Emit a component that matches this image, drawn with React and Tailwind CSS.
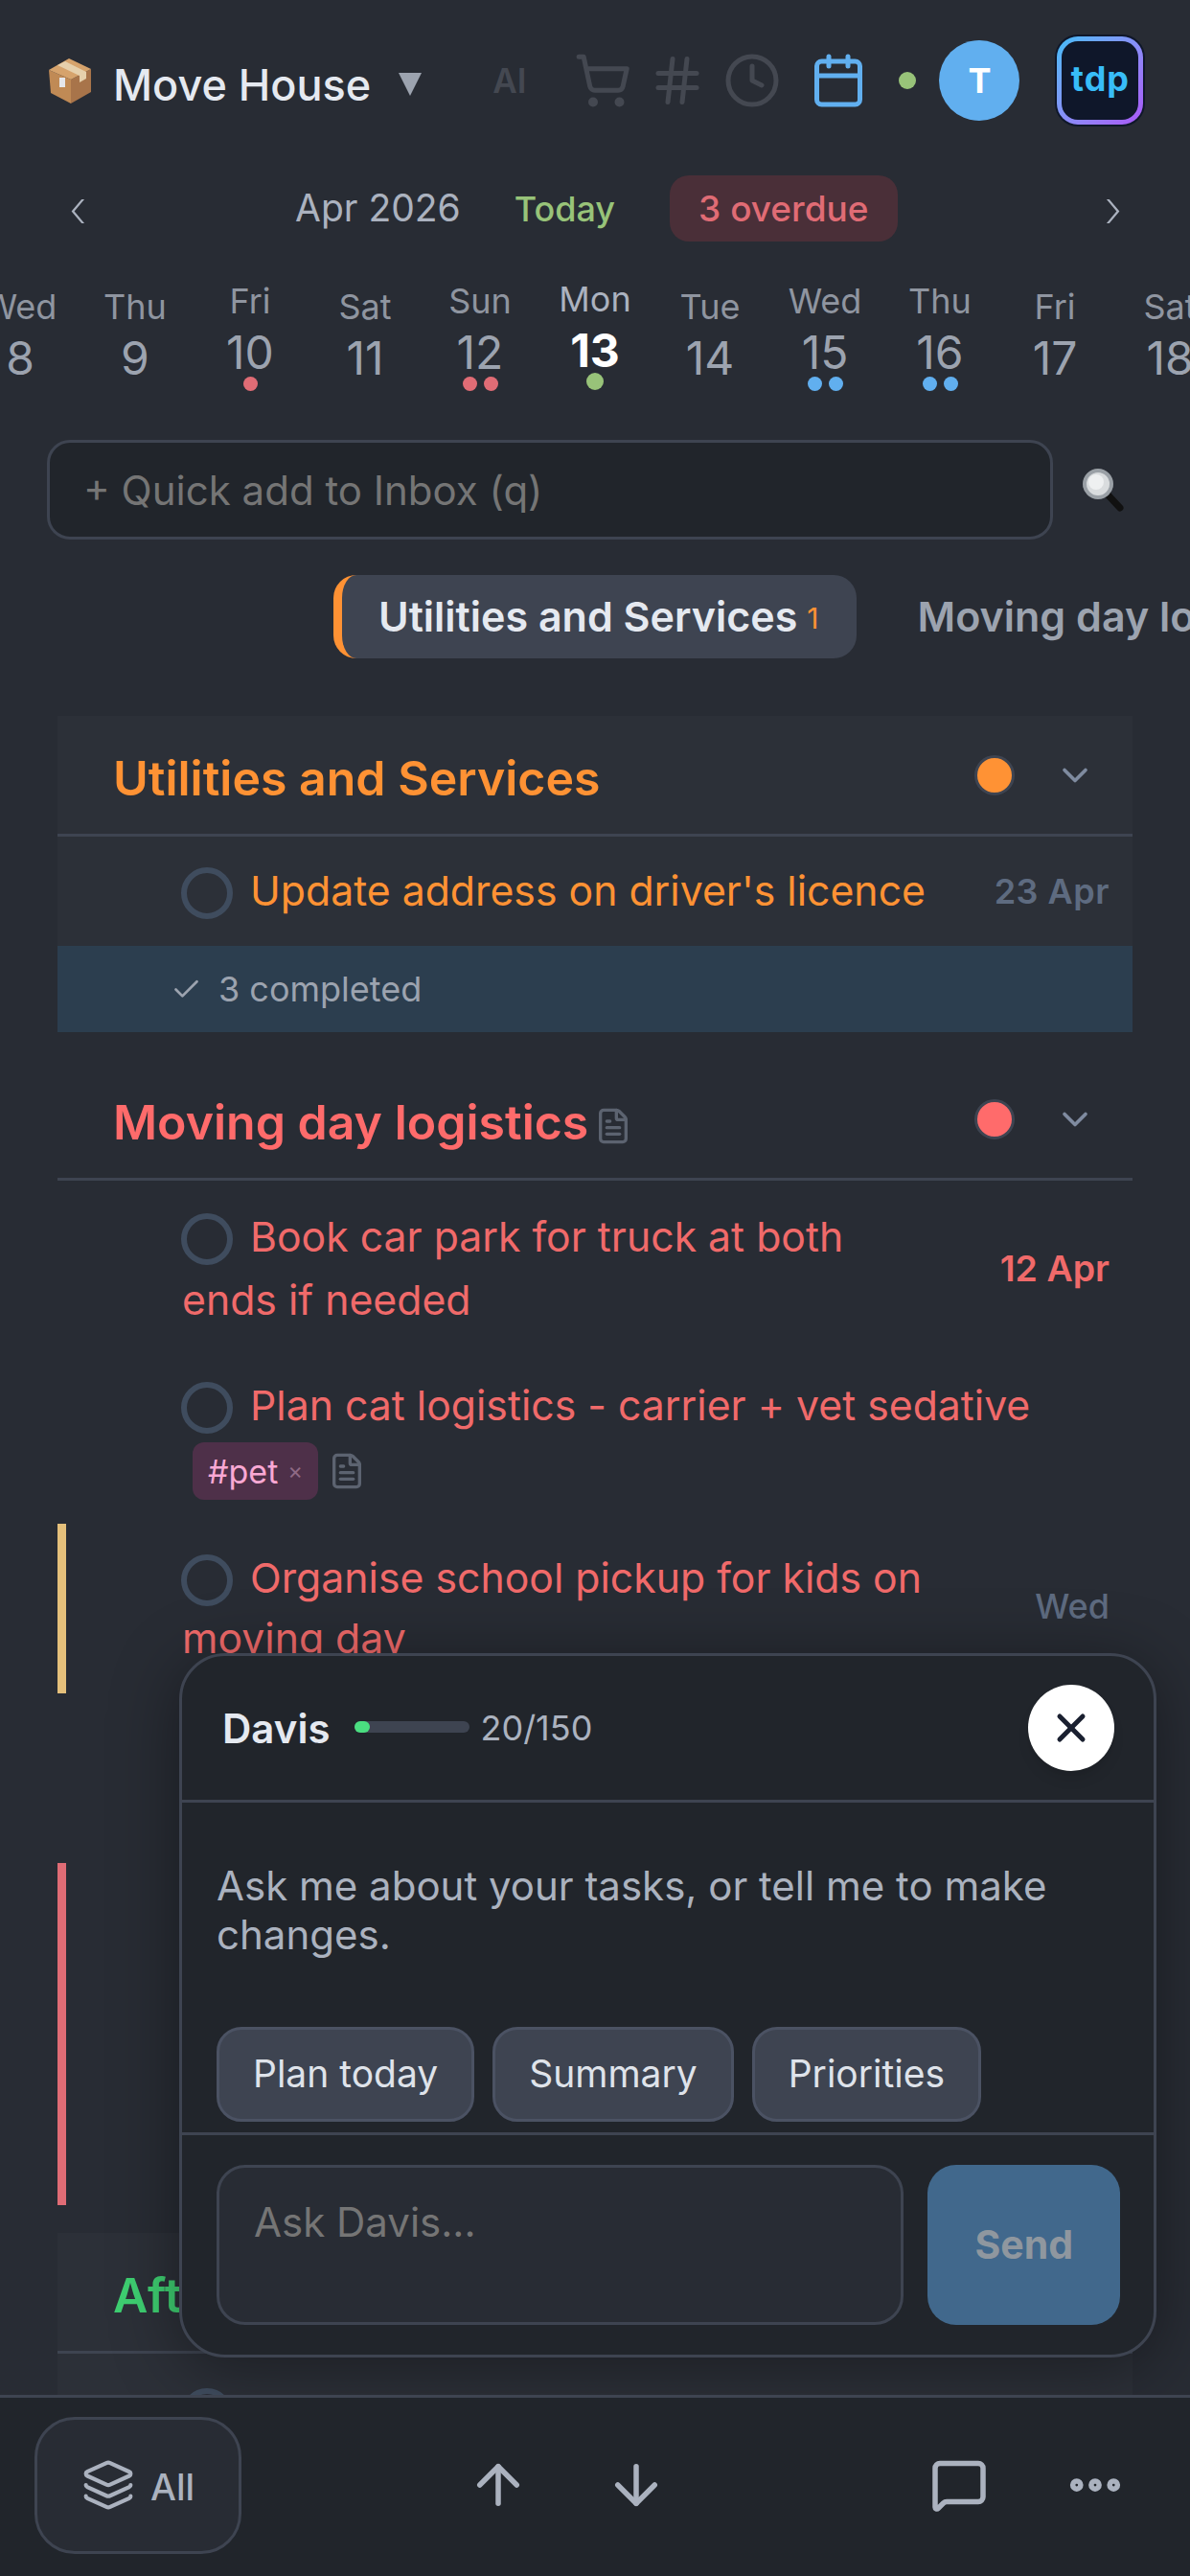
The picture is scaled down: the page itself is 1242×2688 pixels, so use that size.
import { ShoppingCart, Hash, Clock, Calendar, ChevronDown, FileText, X, Layers, ArrowUp, ArrowDown, MessageSquare, MoreHorizontal, Check } from 'lucide-react'

const days = [
  { label: 'Wed', num: '8' },
  { label: 'Thu', num: '9' },
  { label: 'Fri', num: '10', dots: ['bg-[#e06c75]'] },
  { label: 'Sat', num: '11' },
  { label: 'Sun', num: '12', dots: ['bg-[#e06c75]', 'bg-[#e06c75]'] },
  { label: 'Mon', num: '13', today: true, dots: ['bg-[#98c379]'] },
  { label: 'Tue', num: '14' },
  { label: 'Wed', num: '15', dots: ['bg-[#61afef]', 'bg-[#61afef]'] },
  { label: 'Thu', num: '16', dots: ['bg-[#61afef]', 'bg-[#61afef]'] },
  { label: 'Fri', num: '17' },
  { label: 'Sat', num: '18' },
]

const BoxEmoji = () => (
  <svg width="46" height="48" viewBox="0 0 46 48" className="shrink-0">
    <path d="M1 13 L24 23 L24 48 L3 37 Z" fill="#c08a55" />
    <path d="M24 23 L45 12 L45 36 L24 48 Z" fill="#a8744a" />
    <path d="M1 13 L22 1 L45 12 L24 23 Z" fill="#d6a36c" />
    <path d="M10 8 L33 19 L33 26 L40 22 L40 15 L18 4 Z" fill="#e6d0ac" />
    <rect x="12" y="21" width="6" height="10" fill="#e5e7eb" />
  </svg>
)

const Magnifier = () => (
  <svg width="46" height="46" viewBox="0 0 46 46">
    <path d="M26 27 L40 42" stroke="#111" strokeWidth="7" strokeLinecap="round" />
    <circle cx="17" cy="17" r="14" fill="#d9dcde" stroke="#9aa0a6" strokeWidth="4" />
    <circle cx="15" cy="15" r="8" fill="#eef0f1" />
  </svg>
)

const Dot = ({ color }) => (
  <div className={`w-[42px] h-[42px] rounded-full border-[3px] border-[#3e4451] ${color}`} />
)

const Ring = () => (
  <span className="inline-block align-middle w-[54px] h-[54px] rounded-full border-[6px] border-[#3f4c5e] mr-[18px] -mt-[3px] -ml-[1px]" />
)

const Task = ({ children, date, dateClass, color, className }) => (
  <div className={`flex items-center pl-[130px] pr-[24px] ${className}`}>
    <div className={`flex-1 text-[42.75px] leading-[66px] ${color}`}>
      <Ring />
      {children}
    </div>
    {date && <span className={`shrink-0 ${dateClass}`}>{date}</span>}
  </div>
)

const SectionHeader = ({ title, color, dot, note }) => (
  <div className="flex items-center h-[126px] border-b-[3px] border-[#3e4451] pl-[58px] pr-[38px]">
    <h2 className={`flex-1 flex items-center pt-[8px] text-[50px] font-semibold whitespace-nowrap ${color}`}>
      {title}
      {note && <FileText size={40} className="ml-[6px] mt-[6px] text-[#5c6370]" />}
    </h2>
    <Dot color={dot} />
    <ChevronDown size={44} className="ml-[41px] text-[#7f8ba0]" />
  </div>
)

export default function App() {
  return (
    <div className="relative w-[1242px] h-[2688px] overflow-hidden bg-[#282c34] font-['Inter',sans-serif] text-[#abb2bf]">

      {/* Header */}
      <div className="flex items-center h-[168px] pl-[50px]">
        <BoxEmoji />
        <span className="ml-[22px] mt-[10px] text-[45px] font-medium text-[#e5e9f0]">Move House</span>
        <span className="ml-[29px] mt-[8px] w-0 h-0 border-x-[12px] border-x-transparent border-t-[24px] border-t-[#9ca3af]" />
        <span className="ml-[74px] text-[35px] font-semibold text-[#444851]">AI</span>
        <div className="flex items-center gap-[18px] ml-[50px] text-[#444851]">
          <ShoppingCart size={60} strokeWidth={2} />
          <Hash size={60} strokeWidth={2} />
          <Clock size={60} strokeWidth={2} />
        </div>
        <Calendar size={60} strokeWidth={2} className="ml-[30px] text-[#61afef]" />
        <div className="w-[18px] h-[18px] rounded-full bg-[#98c379] ml-[33px]" />
        <div className="flex items-center justify-center w-[84px] h-[84px] rounded-full bg-[#61afef] ml-[24px] text-[36px] font-bold text-white">T</div>
        <div className="w-[94px] h-[96px] ml-[37px] rounded-[24px] bg-[#0f172a] p-[2px]">
          <div className="w-full h-full rounded-[22px] bg-linear-to-br from-[#38bdf8] to-[#a855f7] p-[5px]">
            <div className="flex items-center justify-center w-full h-full rounded-[17px] bg-[#0f172a] text-[36px] font-bold tracking-[1px] text-[#38bdf8] pb-[4px]">tdp</div>
          </div>
        </div>
      </div>

      {/* Month row */}
      <div className="flex items-center h-[69px] mt-[15px] pl-[72px]">
        <span className="w-[16px] text-[54px] font-extralight leading-none text-[#abb2bf]">‹</span>
        <span className="ml-[220px] text-[39px] text-[#abb2bf]">Apr 2026</span>
        <span className="ml-[56px] text-[36px] font-medium text-[#98c379]">Today</span>
        <span className="flex items-center h-[69px] ml-[57px] px-[30px] rounded-[20px] bg-[#4a2f38] text-[37px] font-medium text-[#e06c75]">3 overdue</span>
        <span className="ml-[216px] text-[54px] font-extralight leading-none text-[#abb2bf]">›</span>
      </div>

      {/* Day strip */}
      <div className="flex -ml-[39px] w-[1320px] h-[144px] mt-[45px]">
        {days.map((d, i) => {
          const lifted = d.dots ? '-translate-y-[6px]' : ''
          return (
            <div key={i} className={`flex flex-col items-center w-[120px] ${d.today ? '-translate-y-[8px]' : lifted}`}>
              <span className={`text-[36px] leading-[46px] ${d.today ? 'text-[#abb2bf]' : 'text-[#8f95a0]'}`}>{d.label}</span>
              <span className={`mt-[3px] text-[48px] leading-[56px] ${d.today ? 'font-bold text-white' : 'text-[#9ca3af]'}`}>{d.num}</span>
              {d.dots && (
                <div className="flex items-center gap-[7px] h-[18px] -mt-[5px]">
                  {d.dots.map((c, j) => (
                    <div key={j} className={`rounded-full ${d.today ? 'w-[18px] h-[18px]' : 'w-[15px] h-[15px]'} ${c}`} />
                  ))}
                </div>
              )}
            </div>
          )
        })}
      </div>

      {/* Quick add */}
      <div className="flex items-center mt-[18px] pl-[49px]">
        <div className="flex items-center w-[1050px] h-[104px] px-[35px] rounded-[24px] border-[3px] border-[#3e4451] bg-[#21252b] text-[42px] text-[#757575]">+ Quick add to Inbox (q)</div>
        <div className="ml-[30px]"><Magnifier /></div>
      </div>

      {/* Section tabs */}
      <div className="flex items-center mt-[37px] pl-[348px] whitespace-nowrap">
        <div className="flex items-center shrink-0 h-[87px] pl-[38px] pr-[39px] rounded-[24px] border-l-[9px] border-[#ff9234] bg-[#3e4451] text-[43px] font-semibold text-[#e5e9f0]">
          Utilities and Services
          <span className="ml-[10px] mt-[4px] text-[30px] font-normal text-[#ff9234]">1</span>
        </div>
        <span className="ml-[64px] text-[43px] font-semibold text-[#9ca3af]">Moving day logistics</span>
      </div>

      {/* Sections */}
      <div className="mt-[60px] mx-[60px]">
        <div className="bg-[#2c3038]">
          <SectionHeader title="Utilities and Services" color="text-[#ff9234]" dot="bg-[#ff9234]" />
          <Task color="text-[#ff9234]" date="23 Apr" dateClass="text-[36px] font-semibold tracking-[0.5px] text-[#5e6b80]" className="h-[114px]">Update address on driver's licence</Task>
          <div className="flex items-center h-[90px] pl-[118px] bg-[#2c3e4f] text-[36px] text-[#9ca3af]">
            <Check size={33} className="mr-[17px]" />
            3 completed
          </div>
        </div>

        <div className="mt-[29px]">
          <SectionHeader title="Moving day logistics" color="text-[#ff6b6b]" dot="bg-[#ff6b6b]" note />
          <Task color="text-[#f06a6a]" date="12 Apr" dateClass="text-[37.5px] font-semibold text-[#f06a6a]" className="pt-[26px] pb-[44px]">
            Book car park for truck at both<br />ends if needed
          </Task>
          <div className="pl-[130px] pr-[24px]">
            <div className="text-[42.75px] leading-[66px] text-[#f06a6a] h-[66px]"><Ring />Plan cat logistics - carrier + vet sedative</div>
            <div className="flex items-center pl-[11px] mt-[5px]">
              <span className="flex items-center h-[60px] px-[16px] rounded-[12px] bg-[#4e3049] text-[34px] text-[#f9a8d4]">
                #pet<span className="ml-[10px] text-[24px] text-[#8f6a85]">×</span>
              </span>
              <FileText size={40} className="ml-[10px] text-[#5c6370]" />
            </div>
          </div>
          <div className="mt-[25px] h-[177px] border-l-[9px] border-[#e5c07b] flex pl-[121px] pr-[24px] pt-[25px]">
            <div className="flex-1 text-[42.75px] leading-[63px] text-[#f06a6a]"><Ring />Organise school pickup for kids on<br />moving day</div>
            <span className="shrink-0 mt-[34px] text-[36px] font-medium text-[#5e6b80]">Wed</span>
          </div>
          <div className="mt-[177px] h-[357px] border-l-[9px] border-[#e06c75]" />
        </div>

        <div className="mt-[29px] bg-[#2c3038] pb-[60px]">
          <SectionHeader title="After the move" color="text-[#3ecf71]" dot="bg-[#3ecf71]" />
          <Task color="text-[#3ecf71]" className="pt-[28px]">Forward mail to new address</Task>
        </div>
      </div>

      {/* Davis chat panel */}
      <div className="absolute left-[187px] top-[1725px] w-[1020px] h-[735px] flex flex-col rounded-[48px] border-[3px] border-[#3e4451] bg-[#21252b] shadow-[0_10px_70px_rgba(0,0,0,0.4)]">
        <div className="flex items-center h-[153px] shrink-0 pl-[42px] pr-[41px] border-b-[3px] border-[#3e4451]">
          <span className="text-[42px] font-semibold text-[#e5e9f0]">Davis</span>
          <div className="w-[120px] h-[12px] ml-[26px] mt-[-3px] rounded-full bg-[#3e4451]">
            <div className="w-[16px] h-[12px] rounded-full bg-[#4ade80]" />
          </div>
          <span className="flex-1 ml-[11px] text-[36px] text-[#abb2bf]">20/150</span>
          <div className="flex items-center justify-center w-[90px] h-[90px] rounded-full bg-white shadow-lg">
            <X size={48} strokeWidth={2.5} className="text-[#1a2030]" />
          </div>
        </div>
        <div className="flex-1 flex flex-col pl-[36px] pr-[38px] pt-[61px]">
          <p className="flex-1 text-[42px] leading-[51px] text-[#abb2bf]">Ask me about your tasks, or tell me to make changes.</p>
          <div className="flex gap-[19px] mb-[11px]">
            {['Plan today', 'Summary', 'Priorities'].map((t) => (
              <div key={t} className="flex items-center h-[99px] px-[35px] rounded-[26px] border-[3px] border-[#4b5263] bg-[#3e4451] text-[39px] text-[#dfe3ea]">{t}</div>
            ))}
          </div>
        </div>
        <div className="flex gap-[25px] h-[232px] shrink-0 pl-[36px] pr-[35px] pt-[31px] border-t-[3px] border-[#3e4451]">
          <div className="w-[719px] h-[167px] px-[36px] pt-[32px] rounded-[30px] border-[3px] border-[#3e4451] bg-[#282c34] text-[42px] leading-[50px] text-[#757575]">Ask Davis...</div>
          <div className="flex items-center justify-center w-[201px] h-[167px] rounded-[30px] bg-[#41688c] text-[41px] font-bold text-[#8f979f]">Send</div>
        </div>
      </div>

      {/* Bottom bar */}
      <div className="absolute left-0 right-0 bottom-0 h-[189px] flex items-center pl-[36px] pb-[4px] border-t-[3px] border-[#3e4451] bg-[#21252b]">
        <div className="flex items-center justify-center gap-[16px] w-[216px] h-[143px] rounded-[42px] border-[3px] border-[#3e4451] bg-[#282c34]">
          <Layers size={56} strokeWidth={1.8} className="text-[#abb2bf]" />
          <span className="mt-[4px] text-[38px] font-medium text-[#abb2bf]">All</span>
        </div>
        <ArrowUp size={66} strokeWidth={2} className="ml-[235px] text-[#abb2bf]" />
        <ArrowDown size={66} strokeWidth={2} className="ml-[78px] text-[#abb2bf]" />
        <MessageSquare size={60} strokeWidth={2.2} className="ml-[274px] text-[#abb2bf]" />
        <MoreHorizontal size={66} strokeWidth={3} className="ml-[79px] text-[#abb2bf]" />
      </div>
    </div>
  )
}
